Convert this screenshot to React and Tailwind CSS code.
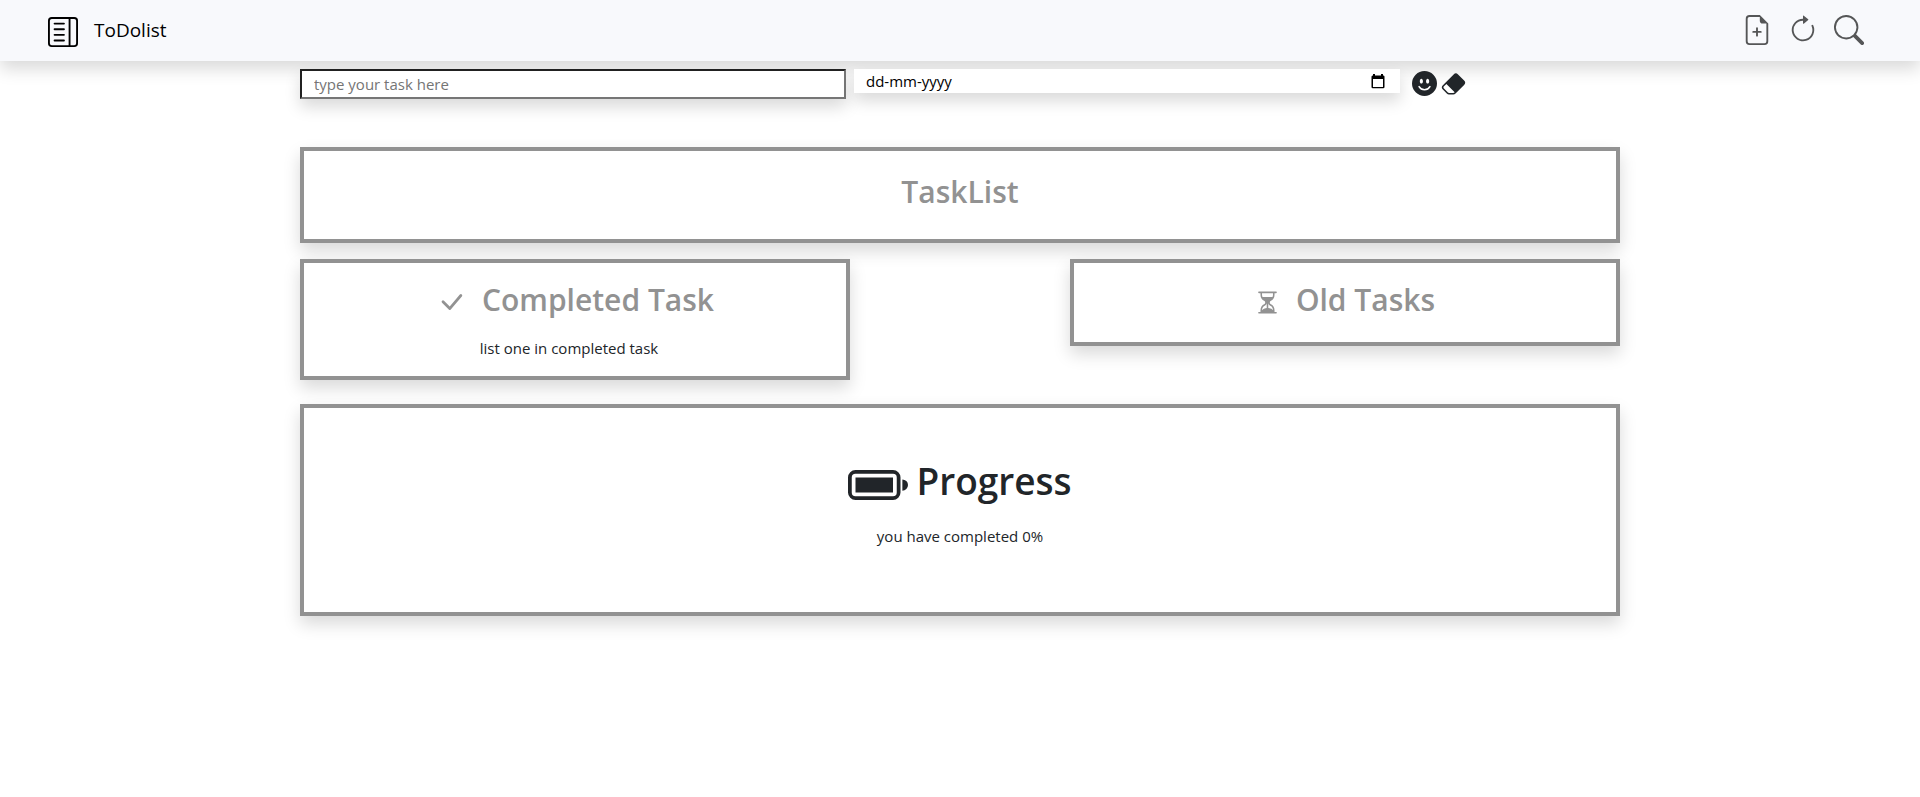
import React from "react";
import {
  BsLayoutTextSidebar,
  BsFileEarmarkPlus,
  BsArrowClockwise,
  BsSearch,
  BsEmojiSmileFill,
  BsEraserFill,
  BsCheckLg,
  BsHourglassSplit,
  BsBatteryFull,
} from "react-icons/bs";

function CalendarIcon() {
  return (
    <svg viewBox="0 0 14 15" className="h-[15px] w-[14px]" fill="currentColor" aria-hidden="true">
      <path d="M2 0h2v1.500h6V0h2v1.500h.5A1.300 1.300 0 0 1 13.500 3v10a1.300 1.300 0 0 1-1.300 1.300H1.800A1.300 1.300 0 0 1 .5 13V3a1.300 1.300 0 0 1 1.300-1.500H2zM2 5v8h10V5z" fillRule="evenodd" />
    </svg>
  );
}

function Panel({ className = "", children }) {
  return (
    <section
      className={`border-4 border-[#929292] bg-white text-center shadow-[0_8px_16px_rgba(0,0,0,0.15)] ${className}`}
    >
      {children}
    </section>
  );
}

function IconButton({ label, children }) {
  return (
    <button type="button" aria-label={label} className="cursor-pointer">
      {children}
    </button>
  );
}

export default function App() {
  return (
    <div className="min-h-screen bg-white font-['Open_Sans','Noto_Sans',sans-serif] text-[15px] leading-6 text-[#212529]">
      <header className="flex items-center justify-between bg-[#f8f9fc] pt-[15px] pr-14 pb-4 pl-12 shadow-[0_8px_16px_rgba(0,0,0,0.15)]">
        <a href="#" className="flex items-center gap-4 text-black">
          <BsLayoutTextSidebar className="mt-0.5 -mb-0.5 size-[30px]" />
          <span className="text-[19px] leading-[30px]">ToDolist</span>
        </a>
        <nav className="flex items-center gap-4 text-[#555657]">
          <IconButton label="Add task">
            <BsFileEarmarkPlus className="size-[30px]" />
          </IconButton>
          <IconButton label="Refresh">
            <BsArrowClockwise className="size-[30px]" />
          </IconButton>
          <IconButton label="Search">
            <BsSearch className="size-[30px]" />
          </IconButton>
        </nav>
      </header>

      <main className="mx-auto max-w-[1320px] pt-2">
        <form className="flex items-start">
          <input
            type="text"
            aria-label="Task"
            placeholder="type your task here"
            className="h-[30px] min-w-0 basis-[546px] border-2 border-t-[#212121] border-r-[#767676] border-b-[#767676] border-l-[#212121] bg-white px-3 shadow-[0_8px_16px_rgba(0,0,0,0.15)] placeholder:text-[#757575]"
          />
          <div className="ml-2 flex h-6 min-w-0 basis-[546px] items-center bg-white pr-[15px] pl-3 text-black shadow-[0_8px_16px_rgba(0,0,0,0.15)]">
            <input
              type="text"
              aria-label="Due date"
              placeholder="dd-mm-yyyy"
              className="h-6 min-w-0 flex-1 placeholder:text-black"
            />
            <IconButton label="Open calendar">
              <CalendarIcon />
            </IconButton>
          </div>
          <div className="mt-[2px] ml-3 flex gap-1">
            <IconButton label="Save task">
              <BsEmojiSmileFill className="size-[25px]" />
            </IconButton>
            <IconButton label="Erase task">
              <BsEraserFill className="size-[25px]" />
            </IconButton>
          </div>
        </form>

        <Panel className="mt-12 px-4 pt-[22px] pb-7 text-[#929292]">
          <h2 className="text-3xl leading-[38px] font-semibold">TaskList</h2>
        </Panel>

        <div className="mt-4 flex items-start justify-between">
          <Panel className="basis-[550px] px-4 pt-[18px] pb-4">
            <h2 className="flex items-center justify-center gap-4 text-3xl leading-[38px] font-semibold text-[#929292]">
              <BsCheckLg className="mt-1 size-[30px]" />
              Completed Task
            </h2>
            <p className="mt-[17px] pr-3">list one in completed task</p>
          </Panel>
          <Panel className="basis-[550px] px-4 pt-[18px] pb-[23px] text-[#929292]">
            <h2 className="flex items-center justify-center gap-4 text-3xl leading-[38px] font-semibold">
              <BsHourglassSplit className="mt-1 size-[25px]" />
              Old Tasks
            </h2>
          </Panel>
        </div>

        <Panel className="mt-6 px-4 pt-[49px] pb-16">
          <h1 className="flex h-12 items-center justify-center gap-2 text-[37px] leading-[48px] font-semibold">
            <BsBatteryFull className="mt-2 size-[60px]" />
            Progress
          </h1>
          <p className="mt-[19px]">you have completed 0%</p>
        </Panel>
      </main>
    </div>
  );
}
